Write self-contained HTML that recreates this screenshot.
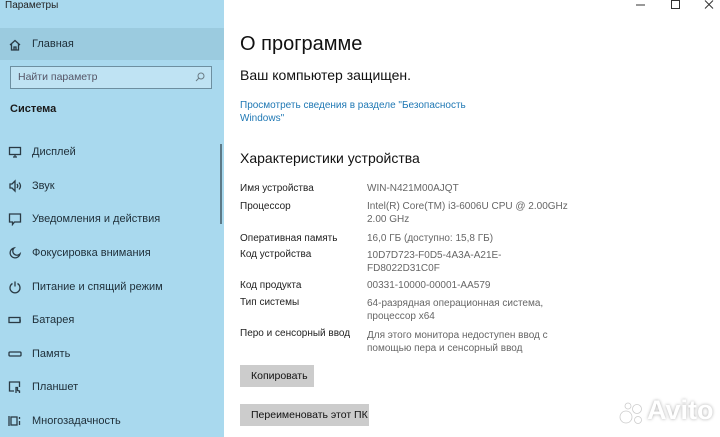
<!DOCTYPE html>
<html><head><meta charset="utf-8"><style>
*{margin:0;padding:0;box-sizing:border-box}
body{width:720px;height:437px;overflow:hidden;background:#fff;font-family:"Liberation Sans","DejaVu Sans",sans-serif;position:relative;color:#1a1a1a}
#side{position:absolute;left:0;top:0;width:224px;height:437px;background:#a9d9ee}
.t{position:absolute;font-size:11px}
.ic{position:absolute;left:8px;width:14px;height:14px}
.ic svg{width:14px;height:14px;fill:none;stroke:#2a3a44;stroke-width:1.3}
.lab{position:absolute;left:32px;font-size:11px;color:#1e2e38}
.k{position:absolute;left:240px;font-size:10px;color:#222}
.v{position:absolute;left:367px;font-size:10px;color:#666;line-height:13px}
.btn{position:absolute;left:240px;background:#cccccc;font-size:10.5px;color:#111;padding-left:11px;line-height:22px}
</style></head><body>
<div id="side">
 <div class="t" style="left:5px;top:0px;font-size:10px;color:#222">Параметры</div>
 <div style="position:absolute;left:0;top:28px;width:224px;height:32px;background:#9bcbdf"></div>
 <div class="ic" style="top:38px"><svg viewBox="0 0 14 14"><path d="M2 7L7 2.5L12 7M3.5 6v6h7V6M6 12V9h2v3"/></svg></div>
 <div class="lab" style="top:38px">Главная</div>
 <div style="position:absolute;left:10px;top:66px;width:202px;height:23px;border:1px solid #6d8fa0;background:#bfe3f3"></div>
 <div class="t" style="left:18px;top:71px;color:#556;font-size:10.5px">Найти параметр</div>
 <svg style="position:absolute;left:195px;top:72px;width:10px;height:10px" viewBox="0 0 10 10"><circle cx="6" cy="4" r="3" fill="none" stroke="#6a7b84" stroke-width="1"/><path d="M4 6L1 9" stroke="#6a7b84"/></svg>
 <div class="t" style="left:10px;top:103px;font-weight:bold;color:#1a1a1a">Система</div>
 <div style="position:absolute;left:220px;top:144px;width:2px;height:80px;background:#5d7a88"></div>
 <div class="ic" style="top:145px"><svg viewBox="0 0 14 14"><rect x="1.5" y="2.5" width="11" height="7"/><path d="M5 12h4M7 9.5v2.5"/></svg></div>
 <div class="lab" style="top:146px">Дисплей</div>
 <div class="ic" style="top:179px"><svg viewBox="0 0 14 14"><path d="M2 5h2l3-3v10l-3-3H2zM9 5q1.5 2 0 4M11 3.5q3 3.5 0 7"/></svg></div>
 <div class="lab" style="top:180px">Звук</div>
 <div class="ic" style="top:212px"><svg viewBox="0 0 14 14"><path d="M1.5 2h11v8h-6l-2 2.5V10h-3z"/></svg></div>
 <div class="lab" style="top:213px">Уведомления и действия</div>
 <div class="ic" style="top:246px"><svg viewBox="0 0 14 14"><path d="M6 2a5 5 0 1 0 6 6a4 4 0 0 1-6-6z"/></svg></div>
 <div class="lab" style="top:247px">Фокусировка внимания</div>
 <div class="ic" style="top:280px"><svg viewBox="0 0 14 14"><path d="M4.5 3.5a5 5 0 1 0 5 0M7 1.5v5"/></svg></div>
 <div class="lab" style="top:281px">Питание и спящий режим</div>
 <div class="ic" style="top:313px"><svg viewBox="0 0 14 14"><rect x="1" y="4.5" width="11" height="5"/><path d="M12 6v2h1"/></svg></div>
 <div class="lab" style="top:314px">Батарея</div>
 <div class="ic" style="top:347px"><svg viewBox="0 0 14 14"><rect x="1" y="5" width="12" height="4" rx="1"/></svg></div>
 <div class="lab" style="top:348px">Память</div>
 <div class="ic" style="top:380px"><svg viewBox="0 0 14 14"><path d="M6 11H1.5V2h10v5M8 13V7.5h1.5v3l2 .5v2"/></svg></div>
 <div class="lab" style="top:381px">Планшет</div>
 <div class="ic" style="top:414px"><svg viewBox="0 0 14 14"><rect x="3" y="3" width="6" height="8"/><path d="M1 2v10M11.5 3v2M11.5 7v4"/></svg></div>
 <div class="lab" style="top:415px">Многозадачность</div>
</div>
<svg style="position:absolute;left:636px;top:0;width:80px;height:12px" viewBox="0 0 80 12" stroke="#333" fill="none" stroke-width="1"><path d="M0 5h9"/><rect x="35.5" y="0.5" width="8" height="8"/><path d="M69 0.5l8 8M77 0.5l-8 8"/></svg>
<div class="t" style="left:240px;top:33px;font-size:20px;color:#111">О программе</div>
<div class="t" style="left:240px;top:67px;font-size:14px;color:#111">Ваш компьютер защищен.</div>
<div class="t" style="left:240px;top:99px;font-size:10px;color:#1f78b4;line-height:13px">Просмотреть сведения в разделе "Безопасность<br>Windows"</div>
<div class="t" style="left:240px;top:150px;font-size:14px;color:#111">Характеристики устройства</div>
<div class="k" style="top:183px">Имя устройства</div><div class="v" style="top:182px">WIN-N421M00AJQT</div>
<div class="k" style="top:201px">Процессор</div><div class="v" style="top:200px">Intel(R) Core(TM) i3-6006U CPU @ 2.00GHz<br>2.00 GHz</div>
<div class="k" style="top:233px">Оперативная память</div><div class="v" style="top:232px">16,0 ГБ (доступно: 15,8 ГБ)</div>
<div class="k" style="top:249px">Код устройства</div><div class="v" style="top:249px">10D7D723-F0D5-4A3A-A21E-<br>FD8022D31C0F</div>
<div class="k" style="top:280px">Код продукта</div><div class="v" style="top:279px">00331-10000-00001-AA579</div>
<div class="k" style="top:297px">Тип системы</div><div class="v" style="top:297px">64-разрядная операционная система,<br>процессор x64</div>
<div class="k" style="top:328px">Перо и сенсорный ввод</div><div class="v" style="top:329px">Для этого монитора недоступен ввод с<br>помощью пера и сенсорный ввод</div>
<div class="btn" style="top:365px;width:74px">Копировать</div>
<div class="btn" style="top:404px;width:129px">Переименовать этот ПК</div>
<svg style="position:absolute;left:618px;top:399px;width:28px;height:28px" viewBox="0 0 28 28" fill="#fff" stroke="#ccc" stroke-width="0.8"><circle cx="8" cy="18" r="6"/><circle cx="19" cy="10" r="4.5"/><circle cx="20" cy="21" r="3.5"/><circle cx="10" cy="7" r="3"/></svg>
<div class="t" style="left:647px;top:395px;font-size:27px;font-weight:bold;color:#fff;text-shadow:0 0 3px #aaa">Avito</div>
</body></html>
